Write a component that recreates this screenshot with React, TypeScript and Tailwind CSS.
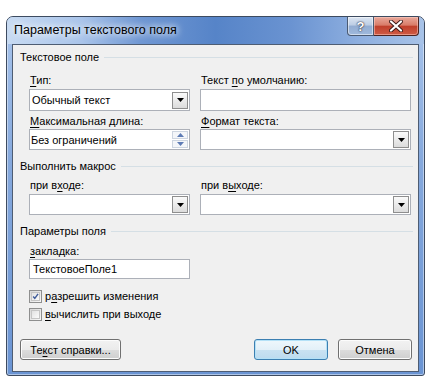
import React from "react";

const font = { fontFamily: '"Liberation Sans", Arial, sans-serif' };

function Key({ children }: { children: React.ReactNode }) {
  return <span className="underline underline-offset-[2px]">{children}</span>;
}

function Header({ children, className = "" }: { children: React.ReactNode; className?: string }) {
  return (
    <div className={`flex items-center h-[14px] pl-[7px] pr-[5px] ${className}`}>
      <span className="whitespace-nowrap">{children}</span>
      <div className="flex-1 h-px bg-[#d5dfe5] ml-[5px]" />
    </div>
  );
}

function Label({ children }: { children: React.ReactNode }) {
  return <div className="h-[14px] leading-[14px] pl-px whitespace-nowrap">{children}</div>;
}

function DropButton() {
  return (
    <div className="w-[16px] h-[17px] border border-[#8e8e8e] bg-[linear-gradient(180deg,#fafafa,#dcdcdc)] flex items-center justify-center">
      <svg width="7" height="4" viewBox="0 0 7 4">
        <path d="M0 0h7L3.5 4z" fill="#000" />
      </svg>
    </div>
  );
}

function Select({ value = "", h = "h-[22px]" }: { value?: string; h?: string }) {
  return (
    <div className={`${h} border border-[#acb0b8] bg-white flex items-center justify-between pl-[2px] pr-[1px]`}>
      <span className="whitespace-nowrap">{value}</span>
      <DropButton />
    </div>
  );
}

function Spin({ value }: { value: string }) {
  return (
    <div className="h-[21px] border border-[#acb0b8] bg-white flex items-center justify-between pl-px pr-[1px]">
      <span className="whitespace-nowrap">{value}</span>
      <div className="flex flex-col w-[16px] h-[17px] gap-px">
        <div className="flex-1 border border-[#cdd5e0] bg-[#f4f6f9] flex items-center justify-center">
          <svg width="7" height="4" viewBox="0 0 7 4">
            <path d="M3.5 0L7 4H0z" fill="#5d7bb5" />
          </svg>
        </div>
        <div className="flex-1 border border-[#cdd5e0] bg-[#f4f6f9] flex items-center justify-center">
          <svg width="7" height="4" viewBox="0 0 7 4">
            <path d="M0 0h7L3.5 4z" fill="#5d7bb5" />
          </svg>
        </div>
      </div>
    </div>
  );
}

function TextBox({ value = "", className = "" }: { value?: string; className?: string }) {
  return (
    <div className={`h-[20px] border border-[#acb0b8] bg-white flex items-center pl-[3px] ${className}`}>
      <span className="whitespace-nowrap">{value}</span>
    </div>
  );
}

function Check({ checked, children }: { checked?: boolean; children: React.ReactNode }) {
  return (
    <div className="flex items-center h-[14px] pl-[16px] gap-[3px]">
      <div className="w-[13px] h-[13px] border border-[#8e8f8f] bg-[linear-gradient(135deg,#d8d8d8,#f8f8f8)] p-px">
        <div className="w-full h-full border border-[#c5c5c5] bg-[linear-gradient(135deg,#e2e2e2,#fbfbfb)] flex items-center justify-center">
          {checked && (
            <svg width="9" height="9" viewBox="0 0 9 9">
              <path d="M1.5 4.5L3.6 7L7.8 1" fill="none" stroke="#3f5c9a" strokeWidth="1.8" />
            </svg>
          )}
        </div>
      </div>
      <span className="whitespace-nowrap">{children}</span>
    </div>
  );
}

function Btn({ children, className = "", def }: { children: React.ReactNode; className?: string; def?: boolean }) {
  return (
    <div
      className={`h-[21px] rounded-[3px] border flex items-center justify-center ${
        def
          ? "border-[#3c7fb1] shadow-[inset_0_0_0_1px_#b4e1f7] bg-[linear-gradient(180deg,#eef7fc_0%,#e3f0f8_50%,#c9e2f2_51%,#bcdbef_100%)]"
          : "border-[#707070] shadow-[inset_0_0_0_1px_#fcfcfc] bg-[linear-gradient(180deg,#f2f2f2_0%,#ebebeb_50%,#dddddd_51%,#cfcfcf_100%)]"
      } ${className}`}
    >
      <span className="whitespace-nowrap">{children}</span>
    </div>
  );
}

export default function App() {
  return (
    <div className="w-[430px] h-[380px] bg-white pt-4 pl-[6px]" style={font}>
      <div className="w-[419px] h-[360px] rounded-t-[7px] rounded-b-[3px] border border-[#3d4b60] bg-[linear-gradient(180deg,#a9c5ec_0%,#86a9dd_40%,#6a94d3_100%)] shadow-[inset_0_0_0_1px_rgba(255,255,255,0.45)] flex flex-col overflow-hidden">
        <div className="h-[27px] flex items-start justify-between bg-[linear-gradient(90deg,#c8dbf2_0%,#a9c4ea_18%,#6f97d3_32%,#5684c8_50%,#6a93d1_68%,#8fb0e0_85%,#a8c3e8_100%)]">
          <div className="pl-[7px] h-full flex items-center text-[12.5px] text-black [text-shadow:0_0_6px_#fff,0_0_10px_#fff]">
            Параметры текстового поля
          </div>
          <div className="flex mr-[5px]">
            <div className="w-[27px] h-[19px] border border-t-0 border-[#4a5a72] rounded-bl-[4px] bg-[linear-gradient(180deg,#dde6f2_0%,#bccde4_45%,#93add2_50%,#9fb9dc_100%)] shadow-[inset_0_0_0_1px_rgba(255,255,255,0.5)] flex items-center justify-center">
              <span className="text-white font-bold text-[13px] leading-none [text-shadow:0_0_1px_#223,0_0_2px_#223]">?</span>
            </div>
            <div className="w-[45px] h-[19px] border border-l-0 border-t-0 border-[#4d2320] rounded-br-[4px] bg-[linear-gradient(180deg,#e9a99b_0%,#d97c69_45%,#c0402c_52%,#cf5b45_100%)] shadow-[inset_0_0_0_1px_rgba(255,210,200,0.5)] flex items-center justify-center">
              <svg width="14" height="12" viewBox="0 0 14 12">
                <path d="M2 1.5L12 10.5M12 1.5L2 10.5" stroke="#3b1a18" strokeWidth="4" strokeLinecap="round" />
                <path d="M2 1.5L12 10.5M12 1.5L2 10.5" stroke="#fff" strokeWidth="2.2" strokeLinecap="round" />
              </svg>
            </div>
          </div>
        </div>
        <div className="flex-1 px-[5px] pb-[3px] flex">
          <div className="flex-1 border border-[#4e5d73] bg-[#f0f0f0] text-[11px] leading-[14px] text-black flex flex-col pt-[5px]">
            <Header>Текстовое поле</Header>
            <div className="grid grid-cols-[161px_211px] gap-x-[10px] pl-[16px]">
              <div className="mt-[9px]">
                <Label>
                  <Key>Т</Key>ип:
                </Label>
              </div>
              <div className="mt-[9px]">
                <Label>
                  Текст <Key>п</Key>о умолчанию:
                </Label>
              </div>
              <div className="mt-[2px]">
                <Select value="Обычный текст" />
              </div>
              <div className="mt-[2px]">
                <TextBox className="h-[22px]" />
              </div>
              <div className="mt-[3px]">
                <Label>
                  <Key>М</Key>аксимальная длина:
                </Label>
              </div>
              <div className="mt-[3px]">
                <Label>
                  <Key>Ф</Key>ормат текста:
                </Label>
              </div>
              <div className="mt-px">
                <Spin value="Без ограничений" />
              </div>
              <div className="mt-px">
                <Select h="h-[21px]" />
              </div>
            </div>
            <Header className="mt-[9px]">Выполнить макрос</Header>
            <div className="grid grid-cols-[161px_211px] gap-x-[10px] pl-[16px]">
              <div className="mt-[5px]">
                <Label>
                  при в<Key>х</Key>оде:
                </Label>
              </div>
              <div className="mt-[5px]">
                <Label>
                  при в<Key>ы</Key>ходе:
                </Label>
              </div>
              <div className="mt-[2px]">
                <Select h="h-[21px]" />
              </div>
              <div className="mt-[2px]">
                <Select h="h-[21px]" />
              </div>
            </div>
            <Header className="mt-[9px]">Параметры поля</Header>
            <div className="pl-[16px] mt-[6px]">
              <Label>
                <Key>з</Key>акладка:
              </Label>
              <TextBox value="ТекстовоеПоле1" className="w-[161px] mt-px" />
            </div>
            <div className="mt-[10px]">
              <Check checked>
                р<Key>а</Key>зрешить изменения
              </Check>
            </div>
            <div className="mt-[4px]">
              <Check>
                <Key>в</Key>ычислить при выходе
              </Check>
            </div>
            <div className="mt-[18px] flex justify-between pl-[7px] pr-[6px]">
              <Btn className="w-[101px]">
                Те<Key>к</Key>ст справки...
              </Btn>
              <div className="flex gap-[10px]">
                <Btn className="w-[74px]" def>
                  OK
                </Btn>
                <Btn className="w-[74px]">Отмена</Btn>
              </div>
            </div>
          </div>
        </div>
      </div>
    </div>
  );
}
